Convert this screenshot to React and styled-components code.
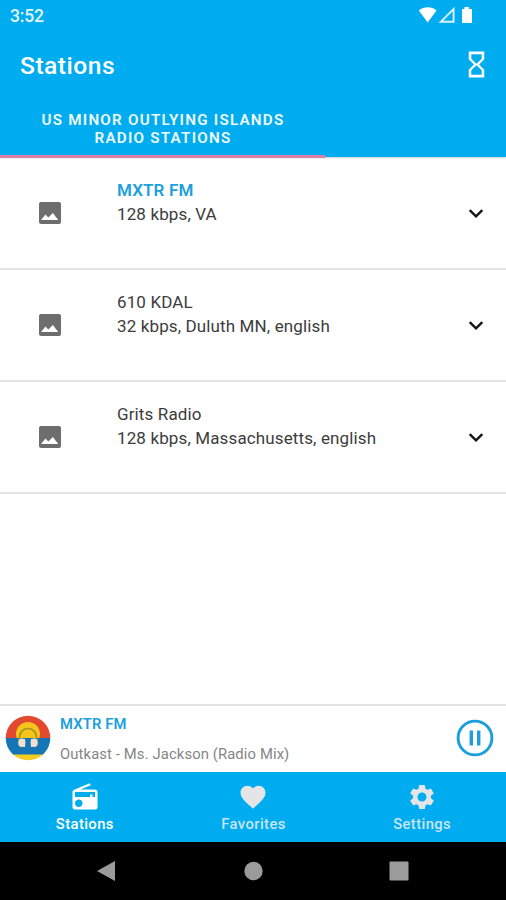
import React from "react"
import styled, { createGlobalStyle } from "styled-components"
import { MdFavorite, MdHourglassEmpty, MdRadio, MdSettings } from "react-icons/md"

const GlobalStyle = createGlobalStyle`
* {
    box-sizing: border-box;
}
body {
    margin: 0;
    background: #fff;
    font-family: Roboto, "Liberation Sans", sans-serif;
}
`
const Phone = styled.div`
width: 506px;
height: 900px;
display: flex;
flex-direction: column;
overflow: hidden;
background: #fff;
`
const Header = styled.header`
height: 157px;
flex: none;
display: flex;
flex-direction: column;
background: #00acf0;
box-shadow: 0 1px 2px rgba(0, 0, 0, 0.2);
color: #fff;
`
const StatusBar = styled.div`
height: 30px;
flex: none;
display: flex;
justify-content: space-between;
align-items: center;
padding: 2px 32px 0 10px;
font-size: 17.5px;
font-weight: 500;
letter-spacing: -0.2px;
color: #e3f5fd;
`
const StatusIcons = styled.div`
display: flex;
align-items: center;
padding-bottom: 2px;
svg {
    display: block;
}
`
const TitleBar = styled.div`
height: 72px;
flex: none;
display: flex;
justify-content: space-between;
align-items: center;
padding: 0 14px 0 20px;
h1 {
    margin: 0;
    font-size: 24.6px;
    line-height: 30px;
    font-weight: 500;
    letter-spacing: 0.5px;
}
svg {
    margin-bottom: 4px;
}
`
const Tab = styled.div`
width: 325px;
height: 56px;
flex: none;
padding: 9px 0 0 1px;
border-bottom: 3px solid #dd7fa4;
text-align: center;
font-size: 15.2px;
line-height: 18px;
font-weight: 600;
letter-spacing: 1.24px;
color: #f0faff;
`
const List = styled.main`
flex: 1;
min-height: 0;
padding-top: 1px;
`
const Row = styled.div`
height: 112px;
display: flex;
align-items: center;
padding: 0 20px 0 39px;
border-bottom: 2px solid #e4e4e4;
`
const RowText = styled.div`
flex: 1;
margin-left: 56px;
margin-top: -22px;
font-size: 17px;
line-height: 24px;
letter-spacing: 0.13px;
color: #3c3c3c;
`
const StationName = styled.div`
font-weight: ${(p) => (p.$playing ? 600 : 400)};
color: ${(p) => (p.$playing ? "#1c9fdd" : "inherit")};
`
const Player = styled.section`
height: 68px;
flex: none;
display: flex;
align-items: center;
padding: 0 12px 2px 5px;
border-top: 2px solid #e2e2e2;
`
const NowPlaying = styled.div`
flex: 1;
margin-left: 9px;
padding-top: 2px;
font-size: 14.8px;
line-height: 30px;
letter-spacing: 0.12px;
color: #858585;
div:first-child {
    font-weight: 600;
    color: #1c9fdd;
}
`
const BottomNav = styled.nav`
height: 70px;
flex: none;
display: grid;
grid-template-columns: repeat(3, 1fr);
background: #00acf0;
`
const NavItem = styled.div`
display: flex;
flex-direction: column;
align-items: center;
padding: 10px 0 0 1px;
font-size: 14.8px;
line-height: 18px;
font-weight: 500;
letter-spacing: 0.4px;
color: ${(p) => (p.$active ? "#fff" : "#c9e5f4")};
svg {
    display: block;
    margin-bottom: 3px;
    color: ${(p) => (p.$active ? "#fff" : "#e4e5e6")};
}
`
const SystemNav = styled.div`
height: 58px;
flex: none;
display: flex;
justify-content: space-between;
align-items: center;
padding: 0 97px 0 96px;
background: #000;
`

const stations = [
    { id: 1, name: "MXTR FM", info: "128 kbps, VA", playing: true },
    { id: 2, name: "610 KDAL", info: "32 kbps, Duluth MN, english" },
    { id: 3, name: "Grits Radio", info: "128 kbps, Massachusetts, english" },
]

const ImageIcon = () => (
    <svg width="22" height="22" viewBox="0 0 22 22">
        <rect width="22" height="22" rx="2" fill="#6d6d6d" />
        <path d="M2 18 L6.5 12.6 L9.3 15.6 L13.8 11 L19.3 18 Z" fill="#fff" />
    </svg>
)

const Chevron = () => (
    <svg width="20" height="20" viewBox="0 0 20 20">
        <path d="M3.7 7.2 L10 13.4 L16.3 7.2" fill="none" stroke="#151515" strokeWidth="2.4" />
    </svg>
)

const StationLogo = () => (
    <svg width="46" height="46" viewBox="0 0 46 46">
        <clipPath id="disc"><circle cx="23" cy="23" r="22.3" /></clipPath>
        <g clipPath="url(#disc)">
            <rect width="46" height="23" fill="#e3492f" />
            <circle cx="23" cy="19" r="12" fill="#f6c51b" />
            <rect y="23" width="46" height="17" fill="#1676b5" />
            <rect y="39.5" width="46" height="7" fill="#f2cd20" />
        </g>
        <path d="M14.5 25 C14 18 17.5 13.5 23 13.5 S32 18 31.5 25" fill="none" stroke="#a79525" strokeWidth="1.7" />
        <ellipse cx="16.8" cy="27.8" rx="3.6" ry="4.2" fill="#f2dfd1" />
        <ellipse cx="29.2" cy="27.8" rx="3.6" ry="4.2" fill="#f2dfd1" />
        <path d="M19.3 24v8M26.7 24v8" stroke="#f2dfd1" strokeWidth="1.6" />
    </svg>
)

const PauseIcon = () => (
    <svg width="38" height="38" viewBox="0 0 38 38">
        <circle cx="19" cy="19" r="16.9" fill="none" stroke="#1a9fde" strokeWidth="2.9" />
        <path d="M15.3 11.5v15M22.7 11.5v15" stroke="#1a9fde" strokeWidth="3.4" />
    </svg>
)

const Signals = () => (
    <StatusIcons>
        <svg width="56" height="18" viewBox="0 0 56 18" fill="#fff">
            <path d="M0.8 4.5 C6 0.3 13.5 0.3 18.5 4.5 L9.7 16.4 Z" />
            <path d="M22.8 15.8 H35.6 V3 Z" fill="none" stroke="#d8f1fc" strokeWidth="1.9" />
            <path d="M46.5 1 h4.5 v2 h3 v14 h-10 v-14 h2.5 Z" />
        </svg>
    </StatusIcons>
)

export default function App() {
    return <Phone>
        <GlobalStyle />
        <Header>
            <StatusBar>
                <span>3:52</span>
                <Signals />
            </StatusBar>
            <TitleBar>
                <h1>Stations</h1>
                <MdHourglassEmpty size={31} />
            </TitleBar>
            <Tab>US MINOR OUTLYING ISLANDS<br />RADIO STATIONS</Tab>
        </Header>
        <List>
            {
                stations.map(i => {
                    return <Row key={i.id}>
                        <ImageIcon />
                        <RowText>
                            <StationName $playing={i.playing}>{i.name}</StationName>
                            <div>{i.info}</div>
                        </RowText>
                        <Chevron />
                    </Row>
                })
            }
        </List>
        <Player>
            <StationLogo />
            <NowPlaying>
                <div>MXTR FM</div>
                <div>Outkast - Ms. Jackson (Radio Mix)</div>
            </NowPlaying>
            <PauseIcon />
        </Player>
        <BottomNav>
            <NavItem $active><MdRadio size={30} />Stations</NavItem>
            <NavItem><MdFavorite size={30} />Favorites</NavItem>
            <NavItem><MdSettings size={30} />Settings</NavItem>
        </BottomNav>
        <SystemNav>
            <svg width="20" height="22" viewBox="0 0 20 22"><path d="M1 11 L19 1 V21 Z" fill="#9b9b9b" /></svg>
            <svg width="20" height="20" viewBox="0 0 20 20"><circle cx="10.5" cy="10" r="9.2" fill="#9b9b9b" /></svg>
            <svg width="20" height="20" viewBox="0 0 20 20"><rect x="0.5" y="0.5" width="19" height="19" rx="1" fill="#9b9b9b" /></svg>
        </SystemNav>
    </Phone>
}
